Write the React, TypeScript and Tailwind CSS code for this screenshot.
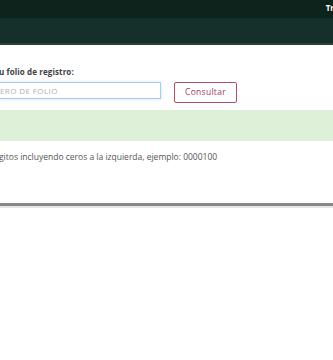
export default function App() {
  return (
    <div
      className="w-[333px] h-[360px] overflow-hidden bg-white"
      style={{ fontFamily: '"Open Sans", "Noto Sans", sans-serif' }}
    >
      <div className="h-[18px] bg-[#0f231d] flex justify-end items-start overflow-hidden">
        <span className="text-[8px] leading-none font-bold text-white mt-[4px] mr-[-1px]">
          Tr
        </span>
      </div>
      <div className="h-[27px] bg-[#15302a] border-b-2 border-[#2b3d37]" />

      <div className="pt-[22px]">
        <label className="block text-[8px] leading-[10px] font-bold text-[#404040] ml-[-1px] tracking-[0.1px]">
          u folio de registro:
        </label>
        <div className="flex items-start gap-[13px] mt-[5px]">
          <div className="w-[161px] h-[17px] border border-l-0 border-[#a9cdee] flex items-center shadow-[0_0_3px_rgba(102,175,233,0.35)]">
            <span className="text-[8px] text-[#b0b0b0] tracking-[0.4px]">ERO DE FOLIO</span>
          </div>
          <button className="w-[63px] h-[21px] border border-[#b0506b] rounded-[2px] text-[8.5px] tracking-[0.3px] text-[#a23a5a] bg-white">
            Consultar
          </button>
        </div>
        <div className="h-[31px] bg-[#dff0d8] mt-[7px]" />
        <p className="text-[8.5px] leading-[10px] text-[#555] mt-[11px] ml-[-1px]">
          gitos incluyendo ceros a la izquierda, ejemplo: 0000100
        </p>
        <div className="mt-[41px] h-[3px] bg-[#878787]" />
        <div className="h-[2px] bg-[#e6e6e6]" />
      </div>
    </div>
  );
}
